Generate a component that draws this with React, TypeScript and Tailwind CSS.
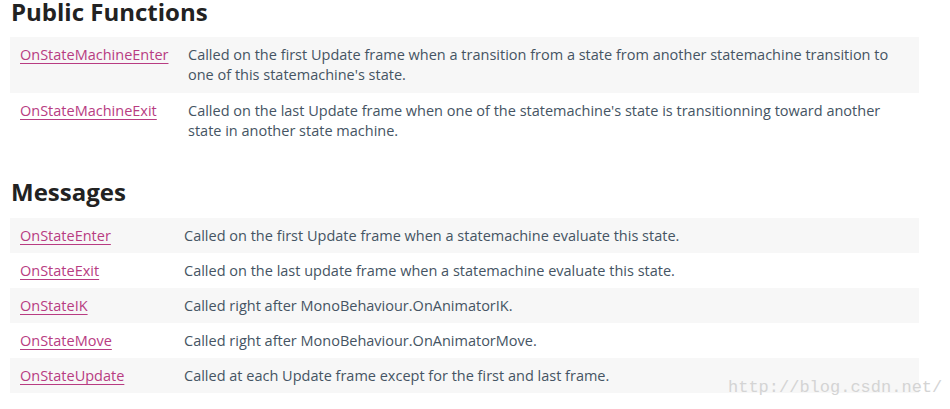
// Unity API reference: StateMachineBehaviour sections
type Entry = { name: string; lines: string[] };

const publicFunctions: Entry[] = [
  {
    name: 'OnStateMachineEnter',
    lines: [
      'Called on the first Update frame when a transition from a state from another statemachine transition to',
      "one of this statemachine's state.",
    ],
  },
  {
    name: 'OnStateMachineExit',
    lines: [
      "Called on the last Update frame when one of the statemachine's state is transitionning toward another",
      'state in another state machine.',
    ],
  },
];

const messages: Entry[] = [
  { name: 'OnStateEnter', lines: ['Called on the first Update frame when a statemachine evaluate this state.'] },
  { name: 'OnStateExit', lines: ['Called on the last update frame when a statemachine evaluate this state.'] },
  { name: 'OnStateIK', lines: ['Called right after MonoBehaviour.OnAnimatorIK.'] },
  { name: 'OnStateMove', lines: ['Called right after MonoBehaviour.OnAnimatorMove.'] },
  { name: 'OnStateUpdate', lines: ['Called at each Update frame except for the first and last frame.'] },
];

function Heading({ children }: { children: string }) {
  return <h2 className="pl-[11px] text-[24px] leading-[24px] font-bold text-[#222]">{children}</h2>;
}

function Table({ rows, wide }: { rows: Entry[]; wide: boolean }) {
  return (
    <div className="ml-[10px] w-[909px]">
      {rows.map((row, i) => (
        <div
          key={row.name}
          className={[
            'flex text-[14.5px] leading-[20px]',
            wide ? 'pt-[8px] pb-[8px]' : 'pt-[8px] pb-[7px]',
            i % 2 === 0 ? 'bg-[#f7f7f7]' : 'bg-white',
          ].join(' ')}
        >
          <div className={wide ? 'w-[178px] shrink-0 pl-[10px]' : 'w-[174px] shrink-0 pl-[10px]'}>
            <a href="#" className="text-[#b83c82] underline underline-offset-[3px]">
              {row.name}
            </a>
          </div>
          <div className="text-[#455463] whitespace-nowrap">
            {row.lines.map((l) => (
              <div key={l}>{l}</div>
            ))}
          </div>
        </div>
      ))}
    </div>
  );
}

export default function App() {
  return (
    <div className="relative w-[950px] h-[409px] bg-white overflow-hidden font-['Open_Sans',sans-serif]">
      <Heading>Public Functions</Heading>
      <div className="mt-[13px]">
        <Table rows={publicFunctions} wide />
      </div>
      <div className="mt-[31px]">
        <Heading>Messages</Heading>
      </div>
      <div className="mt-[14px]">
        <Table rows={messages} wide={false} />
      </div>
      <span className="absolute left-[728px] top-[378px] font-['Liberation_Mono',monospace] text-[17px] leading-[20px] text-[#d4d4d4]">
        http://blog.csdn.net/
      </span>
    </div>
  );
}
